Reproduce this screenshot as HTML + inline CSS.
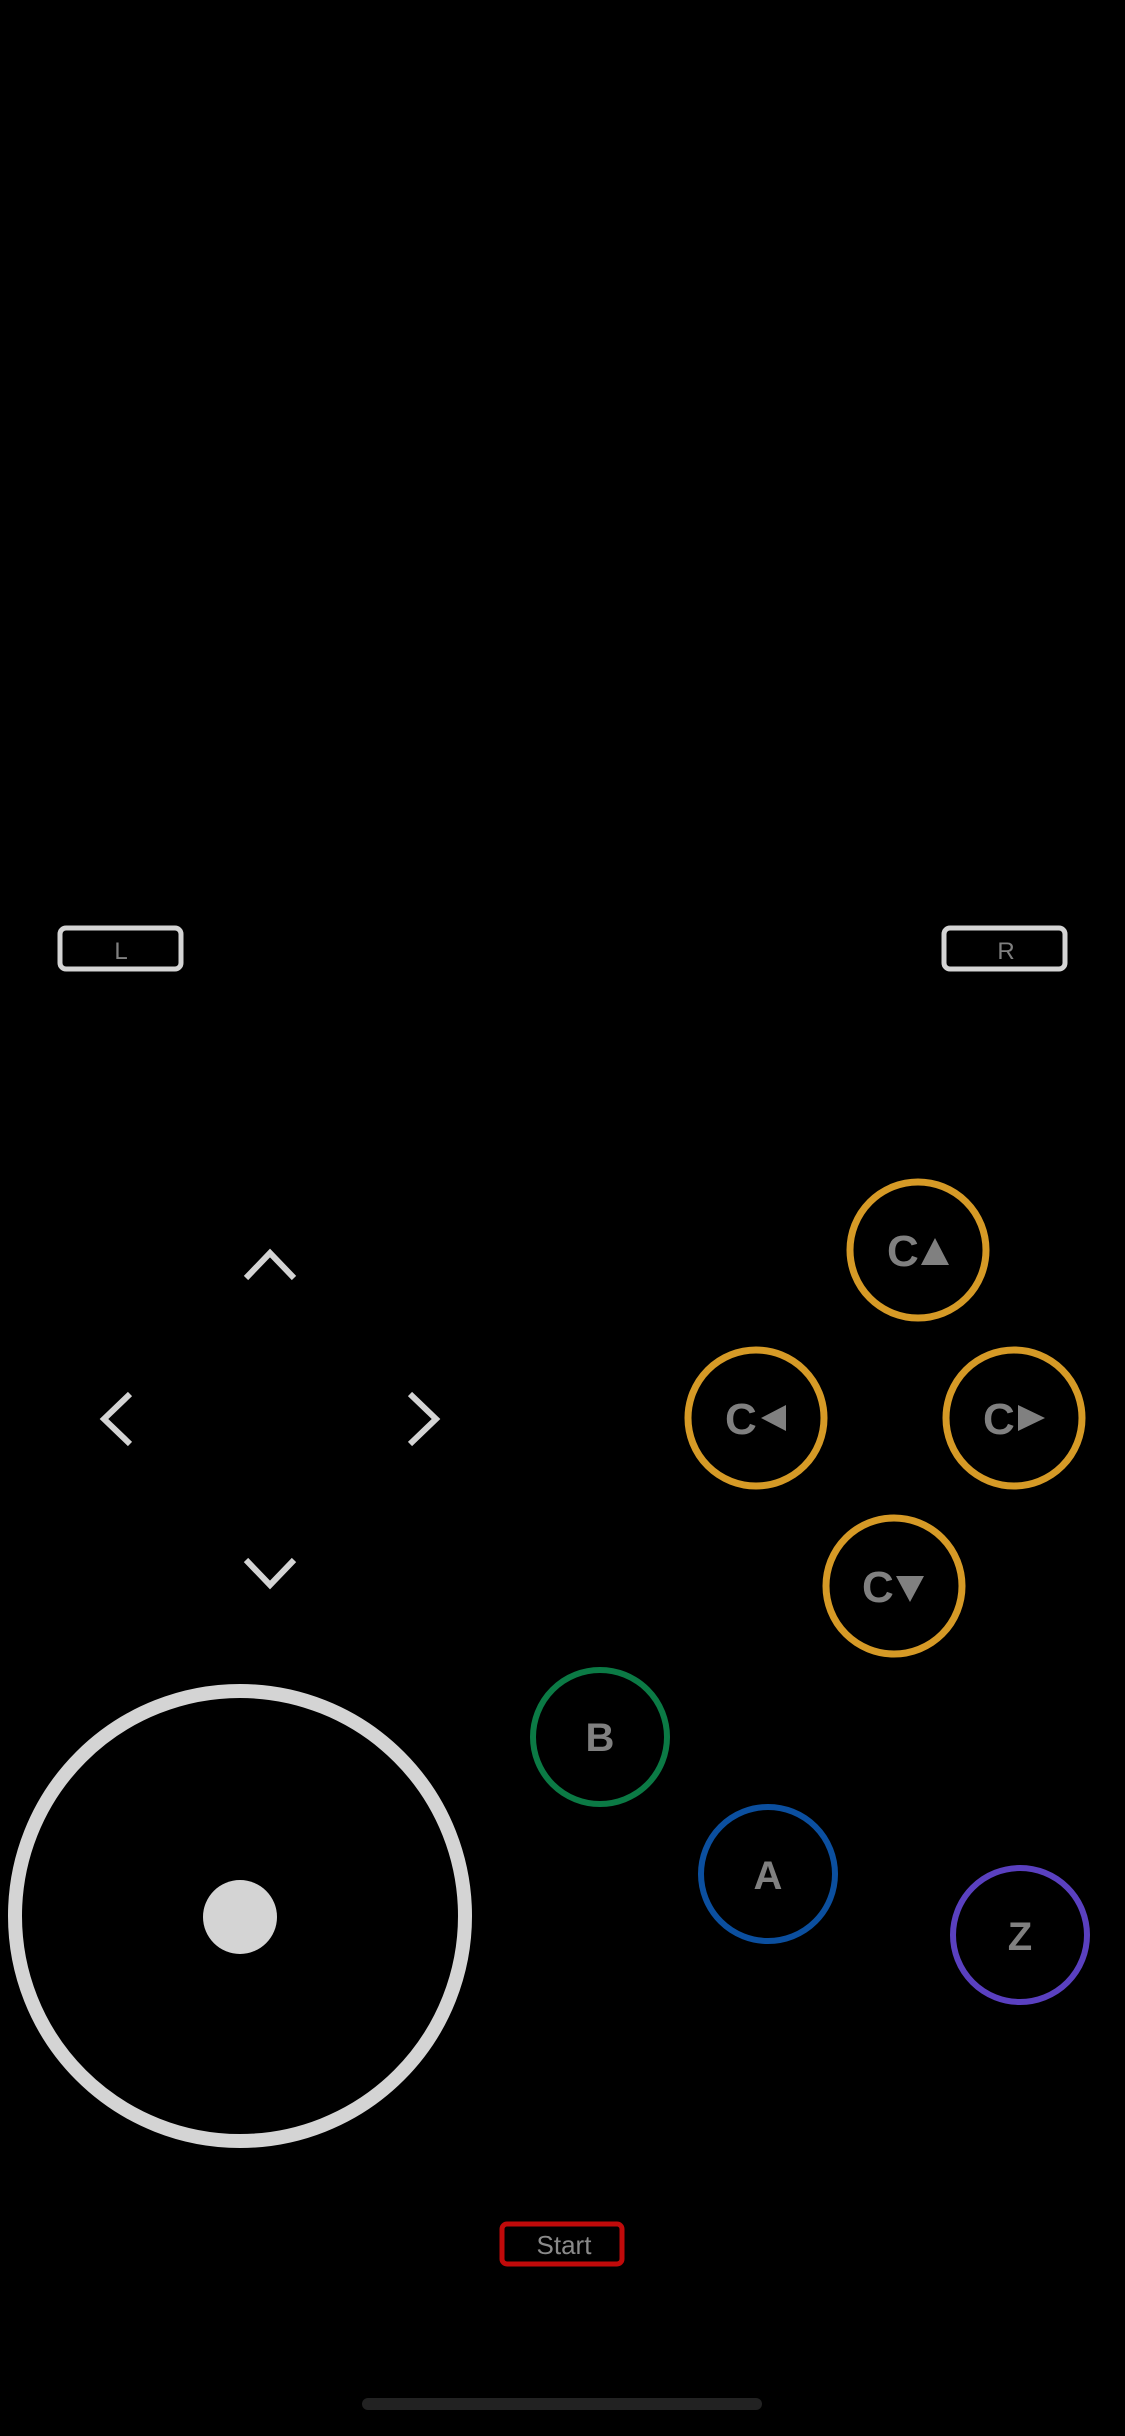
<!DOCTYPE html>
<html><head><meta charset="utf-8"><style>
html,body{margin:0;padding:0;background:#000;width:1125px;height:2436px;overflow:hidden}
svg{display:block}
</style></head><body>
<svg width="1125" height="2436" viewBox="0 0 1125 2436" xmlns="http://www.w3.org/2000/svg">
<rect width="1125" height="2436" fill="#000"/>
<rect x="60" y="928" width="121" height="41" rx="6" fill="none" stroke="#d4d4d4" stroke-width="5"/>
<text x="121" y="959" font-family="Liberation Sans, sans-serif" font-size="24" fill="#808080" text-anchor="middle">L</text>
<rect x="944" y="928" width="121" height="41" rx="6" fill="none" stroke="#d4d4d4" stroke-width="5"/>
<text x="1006" y="959" font-family="Liberation Sans, sans-serif" font-size="24" fill="#808080" text-anchor="middle">R</text>
<g fill="none" stroke="#d4d4d4" stroke-width="6">
<path d="M246 1278 L270 1253 L294 1278"/>
<path d="M130 1394 L104 1419 L130 1444"/>
<path d="M410 1394 L436 1419 L410 1444"/>
<path d="M246 1560 L270 1585 L294 1560"/>
</g>
<g fill="none" stroke="#d69a26" stroke-width="7">
<circle cx="918" cy="1250" r="68"/>
<circle cx="756" cy="1418" r="68"/>
<circle cx="1014" cy="1418" r="68"/>
<circle cx="894" cy="1586" r="68"/>
</g>
<g font-family="Liberation Sans, sans-serif" font-weight="bold" font-size="44" fill="#808080">
<text x="887" y="1266">C</text>
<path d="M921 1265 L935 1238 L949 1265 Z" fill="#808080"/>
<text x="725" y="1434">C</text>
<path d="M786 1405 L786 1431 L761 1418 Z" fill="#808080"/>
<text x="983" y="1434">C</text>
<path d="M1018 1405 L1018 1431 L1045 1418 Z" fill="#808080"/>
<text x="862" y="1602">C</text>
<path d="M896 1576 L924 1576 L910 1602 Z" fill="#808080"/>
</g>
<circle cx="600" cy="1737" r="67" fill="none" stroke="#0b7a45" stroke-width="6"/>
<circle cx="768" cy="1874" r="67" fill="none" stroke="#0b4f9f" stroke-width="6"/>
<circle cx="1020" cy="1935" r="67" fill="none" stroke="#5a40c0" stroke-width="6"/>
<g font-family="Liberation Sans, sans-serif" font-weight="bold" font-size="40" fill="#808080" text-anchor="middle">
<text x="600" y="1751">B</text>
<text x="768" y="1889">A</text>
<text x="1020" y="1950">Z</text>
</g>
<circle cx="240" cy="1916" r="225" fill="none" stroke="#d4d4d4" stroke-width="14"/>
<circle cx="240" cy="1917" r="37" fill="#d4d4d4"/>
<rect x="502" y="2224" width="120" height="40" rx="5" fill="none" stroke="#c00a0a" stroke-width="5"/>
<text x="564" y="2254" font-family="Liberation Sans, sans-serif" font-size="26" fill="#8a8a8a" text-anchor="middle">Start</text>
<rect x="362" y="2398" width="400" height="12" rx="6" fill="#222"/>
</svg>
</body></html>
